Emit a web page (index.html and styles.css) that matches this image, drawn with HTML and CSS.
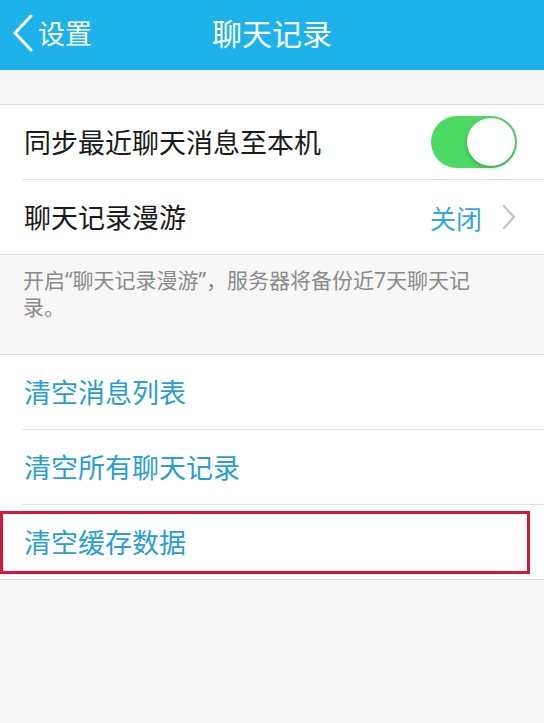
FILE: index.html
```html
<!DOCTYPE html>
<html lang="zh">
<head>
<meta charset="utf-8">
<link rel="stylesheet" href="styles.css">
</head>
<body>
<div class="header">
  <div class="back">
    <svg class="chev" width="22" height="38" viewBox="0 0 22 38"><path d="M19 2 L3 19 L19 36" fill="none" stroke="#fff" stroke-width="3" stroke-linecap="round" stroke-linejoin="round"/></svg>
    <span class="back-text">设置</span>
  </div>
  <div class="title">聊天记录</div>
</div>
<div class="gap"></div>
<div class="group">
  <div class="row">
    <span class="label">同步最近聊天消息至本机</span>
    <div class="toggle"><div class="knob"></div></div>
  </div>
  <div class="row">
    <span class="label">聊天记录漫游</span>
    <div class="value">
      <span class="value-text">关闭</span>
      <svg width="14" height="26" viewBox="0 0 14 26"><path d="M2 2 L12 13 L2 24" fill="none" stroke="#c4c4c4" stroke-width="2.2" stroke-linecap="round" stroke-linejoin="round"/></svg>
    </div>
  </div>
</div>
<div class="note">开启“聊天记录漫游”，服务器将备份近7天聊天记录。</div>
<div class="group">
  <div class="row"><span class="action">清空消息列表</span></div>
  <div class="row"><span class="action">清空所有聊天记录</span></div>
  <div class="row highlighted"><span class="action">清空缓存数据</span></div>
</div>
</body>
</html>
```
FILE: styles.css
```css
* { box-sizing: border-box; }
html, body { margin: 0; padding: 0; }
body {
  background: #f7f7f7;
  font-family: "Noto Sans CJK SC", "Noto Sans", sans-serif;
  width: 544px;
  height: 723px;
  overflow: hidden;
}
.header {
  height: 70px;
  background: #1db2ea;
  position: relative;
  display: flex;
  align-items: center;
  justify-content: center;
}
.back {
  position: absolute;
  left: 12px;
  top: 14px;
  display: flex;
  align-items: center;
  height: 38px;
}
.chev { display: block; }
.back-text {
  color: #fff;
  font-size: 27px;
  line-height: 38px;
  margin-left: 4px;
}
.title {
  color: #fff;
  font-size: 30px;
  line-height: 40px;
  margin-top: -6px;
}
.gap { height: 34px; }
.group {
  background: #fff;
  border-top: 1px solid #dedede;
  border-bottom: 1px solid #dedede;
}
.row {
  height: 75px;
  margin-left: 22px;
  padding-right: 28px;
  display: flex;
  align-items: center;
  justify-content: space-between;
  border-bottom: 1px solid #e2e2e2;
}
.row:last-child { border-bottom: none; height: 74px; }
.label {
  font-size: 27px;
  color: #1a1a1a;
  margin-left: 2px;
  margin-top: -2px;
}
.toggle {
  width: 86px;
  height: 52px;
  border-radius: 26px;
  background: #4cd964;
  position: relative;
  margin-right: -1px;
}
.knob {
  position: absolute;
  right: 2px;
  top: 2px;
  width: 48px;
  height: 48px;
  border-radius: 50%;
  background: #fff;
  box-shadow: 0 2px 4px rgba(0,0,0,0.25);
}
.value {
  display: flex;
  align-items: center;
  gap: 20px;
}
.value-text {
  font-size: 26px;
  color: #36a5dc;
}
.note {
  height: 99px;
  padding: 12px 55px 0 23px;
  font-family: "Noto Sans", "Noto Sans CJK SC", sans-serif;
  font-size: 21px;
  line-height: 27px;
  color: #8a8a8a;
}
.action {
  font-size: 27px;
  color: #2a9ed2;
  margin-left: 2px;
  margin-top: -2px;
}
.highlighted {
  position: relative;
}
.highlighted::after {
  content: "";
  position: absolute;
  left: -22px;
  right: 14px;
  top: 6px;
  bottom: 5px;
  border: 3px solid #d5163c;
}
```
